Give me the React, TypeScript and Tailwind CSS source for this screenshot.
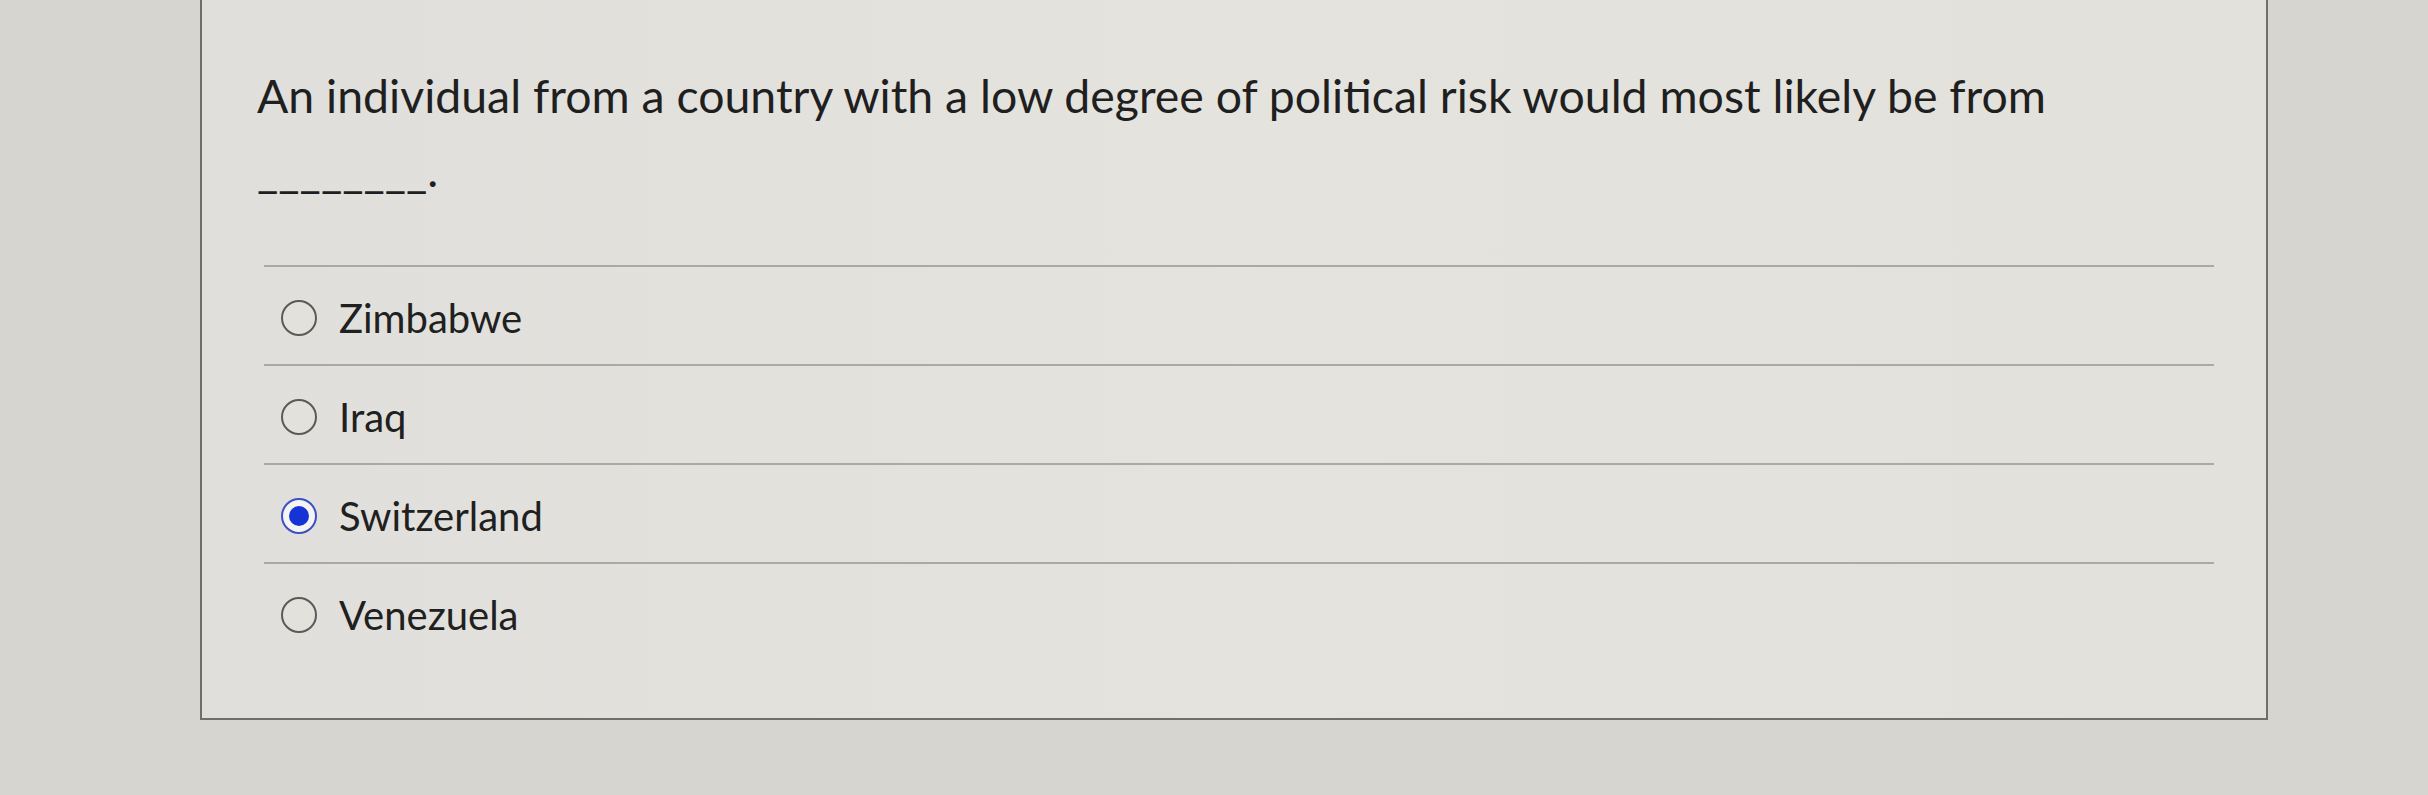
const options = [
  { label: 'Zimbabwe', checked: false },
  { label: 'Iraq', checked: false },
  { label: 'Switzerland', checked: true },
  { label: 'Venezuela', checked: false },
];

function Radio({ checked }: { checked: boolean }) {
  if (checked) {
    return (
      <span className="flex h-[36px] w-[36px] shrink-0 items-center justify-center rounded-full border-2 border-[#3d4fc4] bg-[#f4f4f2]">
        <span className="h-[20px] w-[20px] rounded-full bg-[#1633d6]" />
      </span>
    );
  }
  return <span className="h-[36px] w-[36px] shrink-0 rounded-full border-2 border-[#5a5a58] bg-[#e2e1dc]" />;
}

export default function App() {
  return (
    <div
      className="h-[795px] w-[2428px] overflow-hidden bg-[#d6d5d0] pl-[200px]"
      style={{ fontFamily: 'Lato, "Open Sans", sans-serif' }}
    >
      <div className="h-[720px] w-[2068px] border-x-2 border-b-2 border-[#6e6e6b] bg-gradient-to-r from-[#e0dfdb] via-[#e4e3de] to-[#e2e1dc] pt-[58px]">
        {/* Question */}
        <p className="pl-[55px] text-[46.4px] leading-[74px] text-[#1f1f1f]">
          An individual from a country with a low degree of political risk would most likely be from
          <br />
          ________.
        </p>

        {/* Answers */}
        <div className="ml-[62px] mt-[59px] w-[1950px]">
          {options.map((o) => (
            <div
              key={o.label}
              className="flex h-[99px] items-center gap-[22px] border-t-2 border-[#aaa9a5] pb-[2px] pl-[17px] pt-[6px]"
            >
              <Radio checked={o.checked} />
              <span className="text-[40px] leading-none text-[#202020]">{o.label}</span>
            </div>
          ))}
        </div>
      </div>
    </div>
  );
}
